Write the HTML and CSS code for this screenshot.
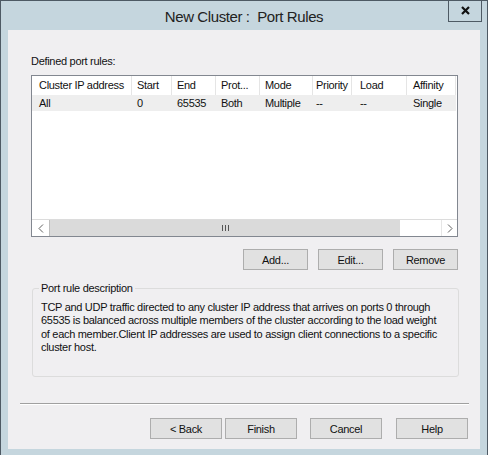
FILE: index.html
```html
<!DOCTYPE html>
<html>
<head>
<meta charset="utf-8">
<link rel="stylesheet" href="styles.css">
</head>
<body>
<div class="window">
  <div class="titlebar">
    <span class="title">New Cluster :&nbsp; Port Rules</span>
    <div class="close">
      <svg width="9" height="9" viewBox="0 0 9 9"><path d="M1 1 L8 8 M8 1 L1 8" stroke="#111" stroke-width="2.2" fill="none"/></svg>
    </div>
  </div>
  <div class="client">
    <div class="caption">Defined port rules:</div>
    <div class="listbox">
      <div class="lrow header">
        <div class="c c1">Cluster IP address</div>
        <div class="c c2">Start</div>
        <div class="c c3">End</div>
        <div class="c c4">Prot...</div>
        <div class="c c5">Mode</div>
        <div class="c c6">Priority</div>
        <div class="c c7">Load</div>
        <div class="c c8">Affinity</div>
      </div>
      <div class="lrow item">
        <div class="c c1">All</div>
        <div class="c c2">0</div>
        <div class="c c3">65535</div>
        <div class="c c4">Both</div>
        <div class="c c5">Multiple</div>
        <div class="c c6">--</div>
        <div class="c c7">--</div>
        <div class="c c8">Single</div>
      </div>
      <div class="lspace"></div>
      <div class="hscroll">
        <div class="arrow left"><svg width="6" height="9" viewBox="0 0 6 9"><path d="M5 0.5 L1 4.5 L5 8.5" stroke="#606060" stroke-width="1" fill="none"/></svg></div>
        <div class="thumb"><svg width="7" height="6" viewBox="0 0 7 6"><path d="M0.5 0 V6 M3.5 0 V6 M6.5 0 V6" stroke="#555" stroke-width="1"/></svg></div>
        <div class="track"></div>
        <div class="arrow right"><svg width="6" height="9" viewBox="0 0 6 9"><path d="M1 0.5 L5 4.5 L1 8.5" stroke="#606060" stroke-width="1" fill="none"/></svg></div>
      </div>
    </div>
    <div class="btnrow">
      <div class="btn">Add...</div>
      <div class="btn">Edit...</div>
      <div class="btn">Remove</div>
    </div>
    <div class="group">
      <div class="group-title">Port rule description</div>
      <p class="desc">TCP and UDP traffic directed to any cluster IP address that arrives on ports 0 through<br>65535 is balanced across multiple members of the cluster according to the load weight<br>of each member.Client IP addresses are used to assign client connections to a specific<br>cluster host.</p>
    </div>
    <div class="separator"></div>
    <div class="navrow">
      <div class="btn nav">&lt; Back</div>
      <div class="btn nav finish">Finish</div>
      <div class="btn nav cancel">Cancel</div>
      <div class="btn nav help">Help</div>
    </div>
  </div>
</div>
</body>
</html>
```
FILE: styles.css
```css
* { box-sizing: border-box; }
html, body { margin: 0; padding: 0; }
body {
  width: 488px;
  height: 455px;
  overflow: hidden;
  background: #c5d6de;
  font-family: "Liberation Sans", Arial, sans-serif;
  font-size: 11px;
  color: #111;
}
.window {
  width: 488px;
  height: 455px;
  border: 1px solid #4e5a64;
  border-bottom: none;
  background: #c5d6de;
}
.titlebar {
  position: relative;
  height: 29px;
  display: flex;
  align-items: center;
  justify-content: center;
}
.title {
  font-size: 15px;
  letter-spacing: -0.4px;
  color: #222;
  margin-top: 1px;
}
.close {
  position: absolute;
  top: -1px;
  right: 5px;
  width: 34px;
  height: 22px;
  border: 1px solid #4e5a64;
  border-top: none;
  display: flex;
  align-items: center;
  justify-content: center;
}
.client {
  margin-left: 7px;
  width: 472px;
  height: 419px;
  background: #f0eff1;
  display: flex;
  flex-direction: column;
  letter-spacing: -0.3px;
}
.caption {
  margin: 25px 0 0 23px;
  line-height: 12px;
}
.listbox {
  margin: 8px 0 0 23px;
  width: 427px;
  height: 162px;
  border: 1px solid #828790;
  background: #fff;
  display: flex;
  flex-direction: column;
}
.lrow {
  display: flex;
}
.header {
  height: 19px;
  align-items: center;
}
.header .c {
  border-right: 1px solid #e5e5e5;
  height: 19px;
  line-height: 19px;
}
.item {
  height: 16px;
  line-height: 16px;
  background: #eeeeee;
  width: 424px;
}
.c {
  padding-left: 5px;
  white-space: nowrap;
  overflow: hidden;
}
.c1 { width: 100px; padding-left: 7px; }
.c2 { width: 40px; }
.c3 { width: 44px; }
.c4 { width: 44px; }
.c5 { width: 53px; }
.c6 { width: 39px; padding-left: 3px; }
.c7 { width: 55px; padding-left: 8px; }
.c8 { width: 49px; padding-left: 6px; }
.lspace { flex: 1; }
.hscroll {
  height: 17px;
  display: flex;
  border-top: 1px solid #dcdcdc;
}
.arrow {
  width: 17px;
  display: flex;
  align-items: center;
  justify-content: center;
  background: #fff;
}
.arrow.right {
  width: 16px;
  border-left: 1px solid #e6e6e6;
}
.thumb {
  width: 351px;
  background: #dadada;
  border-left: 1px solid #bdbdbd;
  display: flex;
  align-items: center;
  justify-content: center;
}
.track {
  flex: 1;
  background: #fff;
}
.btnrow {
  margin: 12px 0 0 235px;
  display: flex;
  gap: 10px;
}
.btn {
  width: 65px;
  height: 21px;
  border: 1px solid #adadad;
  background: #e1e1e1;
  display: flex;
  align-items: center;
  justify-content: center;
  color: #111;
}
.group {
  position: relative;
  margin: 18px 0 0 24px;
  width: 427px;
  height: 89px;
  border: 1px solid #dcdcdc;
  border-radius: 3px;
}
.group-title {
  position: absolute;
  top: -7px;
  left: 6px;
  padding: 0 2px;
  line-height: 12px;
  background: #f0eff1;
}
.desc {
  margin: 0;
  padding: 12px 0 0 8px;
  line-height: 13.3px;
  white-space: nowrap;
}
.separator {
  margin: 26px 0 0 12px;
  width: 449px;
  height: 2px;
  border-top: 1px solid #a0a0a0;
  border-bottom: 1px solid #ffffff;
}
.navrow {
  margin: 13px 0 0 142px;
  display: flex;
}
.btn.nav {
  width: 72px;
  height: 21px;
}
.btn.finish { margin-left: 3px; }
.btn.cancel { margin-left: 13px; }
.btn.help { margin-left: 14px; }
```
